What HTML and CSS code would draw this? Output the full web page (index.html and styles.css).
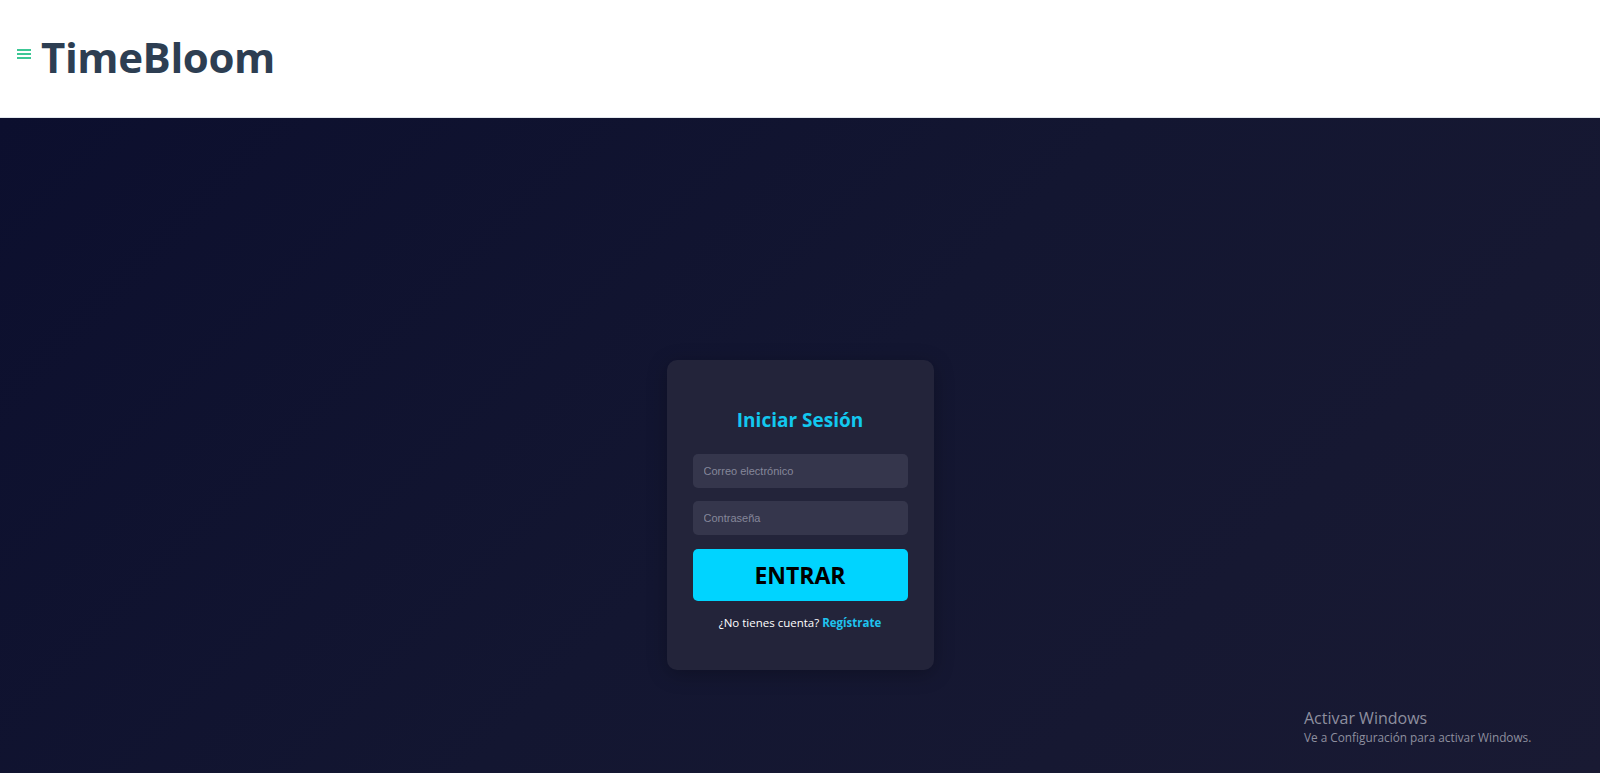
FILE: index.html
```html
<!DOCTYPE html>
<html lang="es">
<head>
<meta charset="utf-8">
<title>TimeBloom</title>
<link rel="stylesheet" href="styles.css">
</head>
<body>
<header class="topbar">
  <button class="menu-btn" aria-label="Menú">
    <span></span><span></span><span></span>
  </button>
  <h1 class="brand">TimeBloom</h1>
</header>
<main class="stage">
  <form class="login-card">
    <h2 class="login-title">Iniciar Sesión</h2>
    <input class="field" type="email" placeholder="Correo electrónico">
    <input class="field field-pass" type="password" placeholder="Contraseña">
    <button class="submit" type="button">ENTRAR</button>
    <p class="signup">¿No tienes cuenta? <a href="#">Regístrate</a></p>
  </form>
  <div class="watermark">
    <div class="wm-title">Activar Windows</div>
    <div class="wm-sub">Ve a Configuración para activar Windows.</div>
  </div>
</main>
</body>
</html>
```

FILE: styles.css
```css
* { box-sizing: border-box; }
html, body { margin: 0; padding: 0; }
body {
  font-family: "Open Sans", "Noto Sans", sans-serif;
  background: #ffffff;
  overflow: hidden;
}
.topbar {
  height: 118px;
  background: #ffffff;
  border-bottom: 1px solid #e3e8ee;
  display: flex;
  align-items: center;
  padding-left: 17px;
  gap: 10px;
}
.menu-btn {
  background: none;
  border: 0;
  padding: 0;
  width: 14px;
  display: flex;
  flex-direction: column;
  gap: 2px;
  margin-top: -10px;
}
.menu-btn span {
  display: block;
  height: 2px;
  background: #3cc795;
}
.brand {
  margin: 0;
  font-size: 42px;
  font-weight: 700;
  color: #2d3e52;
  letter-spacing: -0.4px;
  line-height: 1;
  margin-top: -4px;
}
.stage {
  position: relative;
  height: 655px;
  background: linear-gradient(135deg, #0c0f2e 0%, #131631 50%, #191a33 100%);
  display: flex;
  justify-content: center;
  align-items: flex-start;
  padding-top: 242px;
}
.login-card {
  width: 267px;
  background: #23243a;
  border-radius: 10px;
  padding: 46px 26px 38px;
  display: flex;
  flex-direction: column;
  box-shadow: 0 4px 20px rgba(0,0,0,0.25);
}
.login-title {
  margin: 0 0 20px;
  text-align: center;
  font-size: 19px;
  line-height: 28px;
  font-weight: 700;
  color: #12c8ef;
}
.field {
  height: 34px;
  border: 0;
  border-radius: 5px;
  background: #35364c;
  padding: 0 11px;
  font-family: "Liberation Sans", Arial, sans-serif;
  font-size: 11px;
  color: #ddd;
  outline: none;
}
.field::placeholder { color: #85879a; }
.field-pass { margin-top: 13px; }
.submit {
  margin-top: 14px;
  height: 52px;
  border: 0;
  border-radius: 5px;
  background: #00d4ff;
  color: #000;
  font-family: "Open Sans", "Noto Sans", sans-serif;
  font-size: 23px;
  font-weight: 700;
}
.signup {
  margin: 13px 0 0;
  text-align: center;
  font-size: 11.5px;
  line-height: 18px;
  color: #ffffff;
}
.signup a {
  color: #1fc3ef;
  font-weight: 700;
  text-decoration: none;
}
.watermark {
  position: absolute;
  left: 1304px;
  top: 590px;
  color: #8e8f9f;
  font-family: "Open Sans", "Noto Sans", sans-serif;
}
.wm-title { font-size: 16px; line-height: 20px; }
.wm-sub { font-size: 11.8px; line-height: 19px; }
```
